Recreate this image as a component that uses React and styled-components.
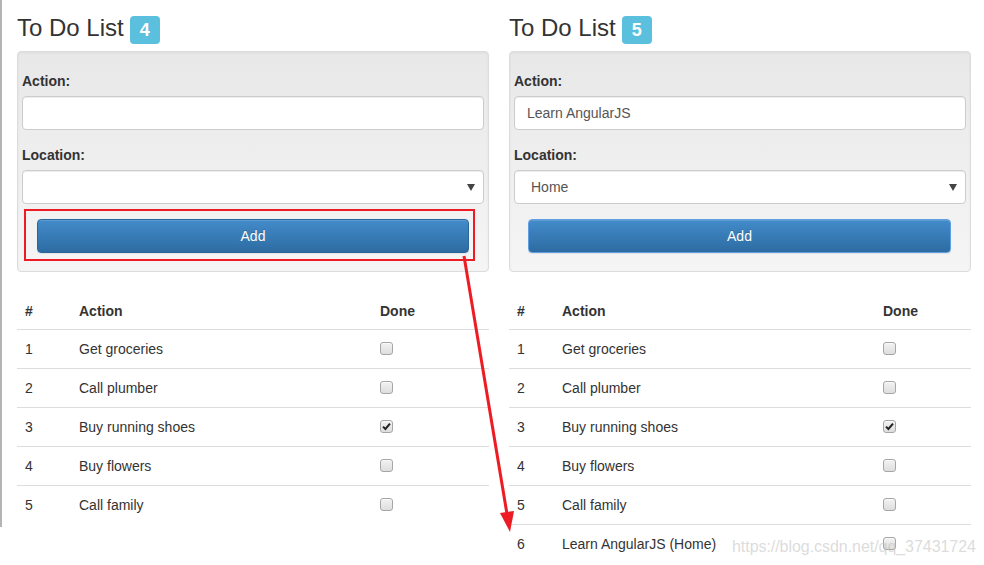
import React from 'react'
import styled, { createGlobalStyle } from 'styled-components'


const GlobalStyle = createGlobalStyle`
  body {
    margin: 0;
    background: #fff;
    font-family: "Liberation Sans", Arial, Helvetica, sans-serif;
    font-size: 14px;
    line-height: 20px;
    color: #333;
  }
  * { box-sizing: border-box; }
`

const Page = styled.div`
  position: relative;
  display: flex;
  align-items: flex-start;
  gap: 20px;
`

const Shot = styled.section`
  width: ${p => p.$width}px;
  flex: none;
  box-sizing: content-box;
  ${p => p.$edge && `
    border-left: 2px solid #b4b4b4;
    padding: 0 0 3px 15px;
  `}
`

const Header = styled.div`
  display: flex;
  align-items: baseline;
  gap: 6px;
  height: 51px;
  padding-top: 14px;
`

const Title = styled.h3`
  margin: 0;
  font-size: 24px;
  font-weight: 400;
  line-height: 28px;
  color: #333;
`

const Badge = styled.span`
  display: inline-block;
  padding: 5px 10px 5px;
  font-size: 18px;
  font-weight: 700;
  line-height: 18px;
  color: #fff;
  background: #5bc0de;
  border-radius: 4px;
`

const Well = styled.div`
  padding: 19px 4px 18px;
  border: 1px solid #dcdcdc;
  border-radius: 4px;
  background: linear-gradient(to bottom, #e8e8e8 0%, #f5f5f5 100%);
  box-shadow: inset 0 1px 3px rgba(0, 0, 0, 0.05), 0 1px 0 rgba(255, 255, 255, 0.1);
`

const FormGroup = styled.div`
  margin-bottom: 15px;
`

const Label = styled.label`
  display: block;
  margin-bottom: 5px;
  font-weight: 700;
`

const Input = styled.input`
  display: block;
  width: 100%;
  height: 34px;
  padding: 6px 12px;
  font: inherit;
  color: #555;
  background: #fff;
  border: 1px solid #ccc;
  border-radius: 4px;
  box-shadow: inset 0 1px 1px rgba(0, 0, 0, 0.075);
  outline: none;
`

const SelectWrap = styled.div`
  position: relative;

  &::after {
    content: '';
    position: absolute;
    right: 9px;
    top: 14px;
    border-left: 4px solid transparent;
    border-right: 4px solid transparent;
    border-top: 7px solid #444;
    pointer-events: none;
  }
`

const Select = styled.select`
  display: block;
  width: 100%;
  height: 34px;
  padding: 6px 12px 6px 16px;
  font: inherit;
  color: #555;
  background: #fff;
  border: 1px solid #ccc;
  border-radius: 4px;
  box-shadow: inset 0 1px 1px rgba(0, 0, 0, 0.075);
  appearance: none;
  outline: none;
`

const ButtonRow = styled.div`
  position: relative;
  margin: 0 15px 0 ${p => p.$left}px;
`

const AddButton = styled.button`
  display: block;
  width: 100%;
  height: 34px;
  padding: 0;
  font: inherit;
  color: #fff;
  text-shadow: 0 -1px 0 rgba(0, 0, 0, 0.2);
  background: linear-gradient(to bottom, #428bca 0%, #2d6ca2 100%);
  border: 1px solid ${p => (p.$focused ? '#5f9ee2' : '#2b669a')};
  border-radius: 4px;
  box-shadow: inset 0 1px 0 rgba(255, 255, 255, 0.15), 0 1px 1px rgba(0, 0, 0, 0.075);
  cursor: pointer;
`

const Highlight = styled.div`
  position: absolute;
  top: -10px;
  left: -13px;
  right: -6px;
  bottom: -8px;
  border: 2px solid #ed1c24;
  pointer-events: none;
`

const Table = styled.table`
  width: 100%;
  margin-top: 21px;
  border-collapse: separate;
  border-spacing: 0;
  table-layout: fixed;
`

const Th = styled.th`
  width: ${p => p.$w}px;
  padding: 8px;
  text-align: left;
  font-weight: 700;
  line-height: 20px;
  border-bottom: 1px solid #ddd;
`

const Row = styled.tr`
  &:first-child td { border-top: 0; }
`

const Td = styled.td`
  padding: 9px 8px;
  line-height: 20px;
  border-top: 1px solid #ddd;
  vertical-align: top;
`

const Box = styled.span`
  display: flex;
  align-items: center;
  justify-content: center;
  width: 13px;
  height: 13px;
  margin: 3px 0 4px;
  border: 1px solid #a6a6a6;
  border-radius: 3px;
  background: linear-gradient(to bottom, #f2f2f2 0%, #dedede 100%);
  box-shadow: inset 0 1px 0 rgba(255, 255, 255, 0.6);
`

const Watermark = styled.div`
  position: absolute;
  left: 732px;
  top: 537px;
  font-size: 16px;
  line-height: 20px;
  letter-spacing: -0.05px;
  color: rgba(190, 190, 190, 0.55);
  white-space: nowrap;
  pointer-events: none;
`

const ArrowLayer = styled.svg`
  position: absolute;
  left: 0;
  top: 0;
  overflow: visible;
  pointer-events: none;
`


const baseItems = [
  'Get groceries',
  'Call plumber',
  'Buy running shoes',
  'Buy flowers',
  'Call family',
]

const Checkbox = ({ checked }) => (
  <Box>
    {checked && (
      <svg width='9' height='9' viewBox='0 0 9 9'>
        <path d='M1 4.6 L3.4 7 L8 1.6' fill='none' stroke='#222' strokeWidth='2' />
      </svg>
    )}
  </Box>
)

const TodoPanel = (props) => {
  const { width, edge, items, action, location, cols, highlight, focused, btnLeft } = props

  return (
    <Shot $width={width} $edge={edge}>
      <Header>
        <Title>To Do List</Title>
        <Badge>{items.length - 1}</Badge>
      </Header>
      <Well>
        <FormGroup>
          <Label>Action:</Label>
          <Input defaultValue={action} />
        </FormGroup>
        <FormGroup>
          <Label>Location:</Label>
          <SelectWrap>
            <Select defaultValue={location}>
              <option value=''></option>
              <option value='Home'>Home</option>
              <option value='Office'>Office</option>
              <option value='Mall'>Mall</option>
            </Select>
          </SelectWrap>
        </FormGroup>
        <ButtonRow $left={btnLeft}>
          <AddButton $focused={focused}>Add</AddButton>
          {highlight && <Highlight />}
        </ButtonRow>
      </Well>
      <Table>
        <thead>
          <tr>
            <Th $w={cols[0]}>#</Th>
            <Th $w={cols[1]}>Action</Th>
            <Th $w={cols[2]}>Done</Th>
          </tr>
        </thead>
        <tbody>
          {items.map((item, i) => (
            <Row key={i}>
              <Td>{i + 1}</Td>
              <Td>{item}</Td>
              <Td><Checkbox checked={i === 2} /></Td>
            </Row>
          ))}
        </tbody>
      </Table>
    </Shot>
  )
}

const App = () => {
  return (
    <>
      <GlobalStyle />
      <Page>
        <TodoPanel
          width={472}
          edge
          items={baseItems}
          action=''
          location=''
          cols={[54, 301, 117]}
          btnLeft={15}
          highlight
        />
        <TodoPanel
          width={462}
          items={[...baseItems, 'Learn AngularJS (Home)']}
          action='Learn AngularJS'
          location='Home'
          cols={[45, 321, 96]}
          btnLeft={14}
          focused
        />
        <ArrowLayer width='984' height='565'>
          <line x1='464' y1='256' x2='507' y2='514' stroke='#ed1c24' strokeWidth='3' />
          <polygon points='510,532 514,511 500,513' fill='#ed1c24' />
        </ArrowLayer>
        <Watermark>https://blog.csdn.net/qq_37431724</Watermark>
      </Page>
    </>
  )
}

export default App
